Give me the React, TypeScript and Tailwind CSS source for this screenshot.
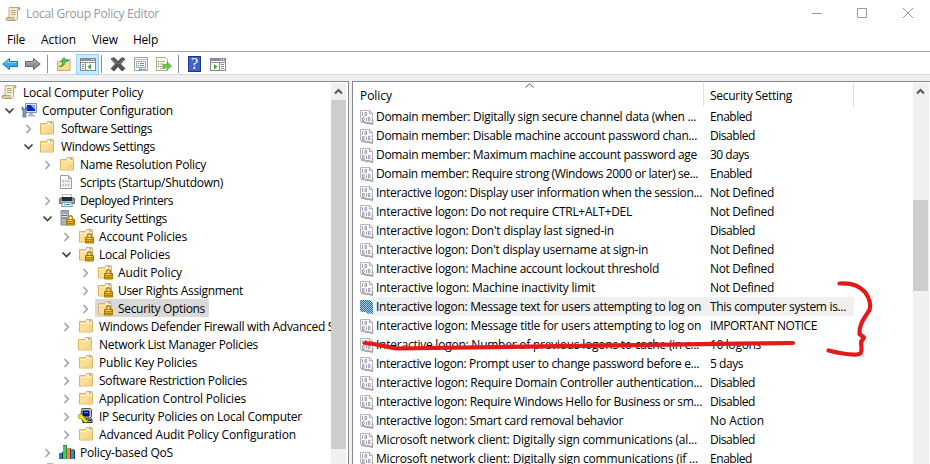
import { useLayoutEffect, useRef, useState } from "react";
import type { ReactNode } from "react";

/* Text whose letter spacing is adjusted so that it takes up a given width. */
function Fit({ text, w, className = "" }: { text: string; w: number; className?: string }) {
  const ref = useRef<HTMLSpanElement>(null);
  const [spacing, setSpacing] = useState(0);
  useLayoutEffect(() => {
    if (ref.current) {
      const natural = ref.current.getBoundingClientRect().width;
      setSpacing((w - natural) / text.length);
    }
  }, [text, w]);
  return (
    <span ref={ref} className={`inline-block shrink-0 whitespace-pre ${className}`} style={{ letterSpacing: `${spacing}px` }}>
      {text}
    </span>
  );
}

function Svg({ children, w = 16 }: { children: ReactNode; w?: number }) {
  return (
    <svg width={w} height="16" viewBox={`0 0 ${w} 16`} className="block shrink-0" fill="none">
      {children}
    </svg>
  );
}

function Scroll() {
  return (
    <Svg>
      <path d="M4.500 1.500h9.500c1.500 0 1.500 2.500 0 2.500h-1.500v7.500c0 2-1 3-2.500 3H2.500c-1.500 0-2-2.500-.5-3h2V3.500c0-1 .2-1.500.5-2z" fill="#f6edcf" stroke="#b0a27c" strokeWidth=".9" />
      <path d="M12.500 4c.2-1-.2-2 1-2.500 2 0 2 2.500.5 2.500z" fill="#bba878" />
      <path d="M2 11.500h7c-.5 1 0 2.500 1 3H2.500c-1.500-.2-1.700-2.500-.5-3z" fill="#dccd9f" stroke="#9c8f6d" strokeWidth=".7" />
      <path d="M6 4.500h4.500M6 6.500h4.500M6 8.500h4.500" stroke="#b3a271" />
    </Svg>
  );
}

function FolderShape() {
  return (
    <>
      <path d="M1.500 3.500h6l1-2h5.500l.5 1v11.500h-13z" fill="#f8d98a" stroke="#d9b563" />
      <path d="M9 2.500h4v2H8z" fill="#fffdf2" />
      <path d="M11 2.500h2v1h-2z" fill="#3b8cde" />
      <path d="M2 5.500h6l1-1h5v9H2z" fill="#fadf98" />
      <path d="M2 5.500h6l1-1h5" stroke="#fff0bd" />
      <path d="M13.500 6v7.500H6z" fill="#f3cd78" opacity=".6" />
    </>
  );
}

function Lock() {
  return (
    <>
      <path d="M9.500 10V8c0-3 4-3 4 0v2" stroke="#a58a3a" strokeWidth="1.500" />
      <path d="M7.500 9.500h8v5.500h-8z" fill="#e1aa18" stroke="#a87500" />
      <path d="M8 11.500h7M8 13.500h7" stroke="#b57d00" />
      <path d="M9 10.500h4" stroke="#ffe27b" />
    </>
  );
}

function TreeIcon({ kind }: { kind: string }) {
  if (kind === "root") return <Scroll />;
  if (kind === "folder") return <Svg><FolderShape /></Svg>;
  if (kind === "locked") return <Svg><FolderShape /><Lock /></Svg>;
  if (kind === "computer")
    return (
      <Svg>
        <path d="M4.500 1.500h11v9h-11z" fill="#dbe2ee" stroke="#8290a8" />
        <path d="M6 3h8v6H6z" fill="#0927c3" />
        <path d="M10 3h4v4c-2-.5-3-2-4-4z" fill="#7aa6ff" />
        <path d="M8 11h4v2h2v1.500H7V13h1z" fill="#a9b5c6" />
        <path d="M1 5v3l1 1v6h3V9l1-1V5H5v2H2V5z" fill="#7c9cc0" stroke="#47678d" strokeWidth=".7" />
      </Svg>
    );
  if (kind === "script")
    return (
      <Svg>
        <path d="M1.500 1.500h8l3 3v10h-11z" fill="#fbfbfb" stroke="#9b9b9b" />
        <path d="M9.500 1.500v3h3" stroke="#9b9b9b" />
        <path d="M5 5.500L3.500 7 5 8.500M9 5.500L10.500 7 9 8.500M5 9.500L3.500 11 5 12.500M9 9.500L10.500 11 9 12.500M5.800 7h2.500M5.800 11h2.500" stroke="#777" strokeWidth=".8" />
      </Svg>
    );
  if (kind === "printer")
    return (
      <Svg>
        <path d="M3.500 2.500h9v4h-9z" fill="#f8f8f8" stroke="#b9bec3" />
        <path d="M.5 6.500l2-1h11l2 1v5H.5z" fill="#8a8e92" stroke="#6d7175" />
        <path d="M3 5h10v4H3z" fill="#292d31" />
        <path d="M1 9.500h14" stroke="#b9bdc1" />
        <path d="M3.500 10.500h9l1 4h-11z" fill="#eef6fa" stroke="#8c9aa3" />
        <path d="M5 12.500h3" stroke="#52a9d9" />
        <path d="M8 12.500h3" stroke="#327fad" />
      </Svg>
    );
  if (kind === "server")
    return (
      <Svg>
        <path d="M2 .5h7.500v14.500H2z" fill="#aab7c0" stroke="#82919c" />
        <path d="M3 3h5M3 5.500h5M3 8h5" stroke="#5e6f7b" />
        <path d="M3 4h5M3 6.500h5" stroke="#e1e8ec" />
        <path d="M3 12h2v1H3z" fill="#69c84b" />
        <Lock />
      </Svg>
    );
  if (kind === "ipsec")
    return (
      <Svg>
        <path d="M4 .5h8.500l1 1.500v7l-2 1H4L2.500 8.500z" fill="#c4c4c4" stroke="#555" />
        <path d="M5 3h6v5H5z" fill="#0909cc" stroke="#111" />
        <path d="M6 4.500h4" stroke="#20a7ee" />
        <path d="M4 11h10v3.500H5z" fill="#bbb" stroke="#222" />
        <path d="M0 7l3-1 2 2 4 5v1.500H7L3 10.500H1z" fill="#f5ed00" stroke="#817b00" strokeWidth=".6" />
        <path d="M10 12.500h3" stroke="#333" />
      </Svg>
    );
  return (
    <Svg>
      <g shapeRendering="crispEdges">
        <path d="M0 9h3v6H0z" fill="#1786d3" />
        <path d="M4 1h4v14H4z" fill="#249641" />
        <path d="M4 2h3v13H4z" fill="#55c259" />
        <path d="M8 4h3v11H8z" fill="#f38050" />
        <path d="M11 4h1v11h-1z" fill="#753e25" />
        <path d="M12 5h3v10h-3z" fill="#218ed7" />
        <path d="M15 6h1v9h-1zM3 8h1v7H3z" fill="#143a52" />
      </g>
    </Svg>
  );
}

type Node = { level: number; text: string; w: number; icon: string; open?: boolean; leaf?: boolean; selected?: boolean };

const tree: Node[] = [
  { level: 0, text: "Local Computer Policy", w: 120, icon: "root", leaf: true },
  { level: 1, text: "Computer Configuration", w: 131, icon: "computer", open: true },
  { level: 2, text: "Software Settings", w: 91, icon: "folder" },
  { level: 2, text: "Windows Settings", w: 94, icon: "folder", open: true },
  { level: 3, text: "Name Resolution Policy", w: 126, icon: "folder" },
  { level: 3, text: "Scripts (Startup/Shutdown)", w: 143, icon: "script", leaf: true },
  { level: 3, text: "Deployed Printers", w: 93, icon: "printer" },
  { level: 3, text: "Security Settings", w: 87, icon: "server", open: true },
  { level: 4, text: "Account Policies", w: 88, icon: "locked" },
  { level: 4, text: "Local Policies", w: 71, icon: "locked", open: true },
  { level: 5, text: "Audit Policy", w: 64, icon: "locked" },
  { level: 5, text: "User Rights Assignment", w: 125, icon: "locked" },
  { level: 5, text: "Security Options", w: 87, icon: "locked", selected: true },
  { level: 4, text: "Windows Defender Firewall with Advanced Security", w: 271, icon: "folder" },
  { level: 4, text: "Network List Manager Policies", w: 159, icon: "folder", leaf: true },
  { level: 4, text: "Public Key Policies", w: 98, icon: "folder" },
  { level: 4, text: "Software Restriction Policies", w: 148, icon: "folder" },
  { level: 4, text: "Application Control Policies", w: 147, icon: "folder" },
  { level: 4, text: "IP Security Policies on Local Computer", w: 203, icon: "ipsec" },
  { level: 4, text: "Advanced Audit Policy Configuration", w: 197, icon: "folder" },
  { level: 3, text: "Policy-based QoS", w: 93, icon: "qos" },
  { level: 2, text: "", w: 0, icon: "folder", leaf: true },
];

const indents = ["pl-[2px]", "pl-[2px]", "pl-[21px]", "pl-[40px]", "pl-[59px]", "pl-[78px]"];

function Chevron({ open }: { open?: boolean }) {
  return (
    <svg width="16" height="18" viewBox="0 0 16 18" fill="none" className="block">
      {open ? (
        <path d="M3.500 7.500l4 4 4-4" stroke="#404040" strokeWidth="1.700" />
      ) : (
        <path d="M5.500 6l3.800 4-3.800 4" stroke="#a6a6a6" strokeWidth="1.700" />
      )}
    </svg>
  );
}

function TreeRow({ node }: { node: Node }) {
  return (
    <div className={`flex h-[18px] shrink-0 items-center ${indents[node.level]}`}>
      {node.level > 0 && <div className="w-[19px] shrink-0">{!node.leaf && <Chevron open={node.open} />}</div>}
      {!node.selected && (
        <div className="w-[21px] shrink-0">
          <div className={node.level === 2 || (node.leaf && node.icon !== "script") ? "-ml-px" : ""}>
            <TreeIcon kind={node.icon} />
          </div>
        </div>
      )}
      <div className={`flex h-[18px] items-center pr-1 ${node.selected ? "-ml-[2px] bg-[#d9d9d9] pl-[2px]" : ""}`}>
        {node.selected && (
          <div className="w-[21px]">
            <TreeIcon kind={node.icon} />
          </div>
        )}
        <Fit text={node.text} w={node.w} className="pt-px" />
      </div>
    </div>
  );
}

type Policy = [string, number, string, number];

const policies: Policy[] = [
  ["Domain member: Digitally sign secure channel data (when ...", 320, "Enabled", 42],
  ["Domain member: Disable machine account password chan...", 321, "Disabled", 45],
  ["Domain member: Maximum machine account password age", 321, "30 days", 39],
  ["Domain member: Require strong (Windows 2000 or later) se...", 322, "Enabled", 42],
  ["Interactive logon: Display user information when the session...", 326, "Not Defined", 64],
  ["Interactive logon: Do not require CTRL+ALT+DEL", 256, "Not Defined", 64],
  ["Interactive logon: Don't display last signed-in", 238, "Disabled", 45],
  ["Interactive logon: Don't display username at sign-in", 272, "Not Defined", 64],
  ["Interactive logon: Machine account lockout threshold", 283, "Not Defined", 64],
  ["Interactive logon: Machine inactivity limit", 219, "Not Defined", 64],
  ["Interactive logon: Message text for users attempting to log on", 325, "This computer system is...", 136],
  ["Interactive logon: Message title for users attempting to log on", 325, "IMPORTANT NOTICE", 107],
  ["Interactive logon: Number of previous logons to cache (in c...", 323, "10 logons", 51],
  ["Interactive logon: Prompt user to change password before e...", 323, "5 days", 33],
  ["Interactive logon: Require Domain Controller authentication...", 326, "Disabled", 45],
  ["Interactive logon: Require Windows Hello for Business or sm...", 326, "Disabled", 45],
  ["Interactive logon: Smart card removal behavior", 247, "No Action", 54],
  ["Microsoft network client: Digitally sign communications (al...", 321, "Disabled", 45],
  ["Microsoft network client: Digitally sign communications (if ...", 322, "Enabled", 42],
];

function PolicyIcon({ selected }: { selected: boolean }) {
  return (
    <svg width="14" height="16" viewBox="0 0 14 16" fill="none" className="block shrink-0">
      {selected ? (
        <>
          <defs>
            <pattern id="dither" width="2" height="2" patternUnits="userSpaceOnUse">
              <rect width="2" height="2" fill="#a4cfef" />
              <path d="M0 0h1v1H0zM1 1h1v1H1z" fill="#0078d7" shapeRendering="crispEdges" />
            </pattern>
          </defs>
          <path d="M0 1h10l3 3v11h-2l-1-1-2 1-2-2H2l-2-1z" fill="url(#dither)" />
        </>
      ) : (
        <>
          <path d="M.5 1.500h9.500l2.500 3v10h-2l-1-1-2 1.500-2-2h-3l-2-1z" fill="#fafafa" stroke="#b7b7b7" />
          <path d="M9.500 1.500v3h3" stroke="#aaa" />
          <path d="M1 13h3l2 1.500 2-1 3 1.500h1.500v-4" stroke="#a2a2a2" strokeWidth="1.400" />
          <path d="M2.500 3v4M2.500 8.500v3h1.500v-3zM5 3.500h1.500v3H5zM6.500 8.500v3.500M8.500 8.500H10v3H8.500z" stroke="#9994ad" strokeWidth=".9" />
        </>
      )}
    </svg>
  );
}

function ScrollArrow() {
  return (
    <svg width="16" height="17" viewBox="0 0 16 17" fill="none" className="block">
      <path d="M4 10.500l3.500-3.500 3.500 3.500" stroke="#555" strokeWidth="2" />
    </svg>
  );
}

/* A small window with a side pane to the left or the right of its arrow. */
function PanelIcon({ arrow }: { arrow: "left" | "right" }) {
  return (
    <Svg>
      <g shapeRendering="crispEdges">
        <path d="M.5 2.500h15v12H.5z" fill="#fff" stroke="#858b93" />
        <path d="M1 3h14v2H1z" fill="#8a9098" />
        <path d="M11 3h1v1h-1zM13 3h1v1h-1z" fill="#fff" />
        <path d="M1 6.500h14" stroke="#8b929b" />
        <path d={arrow === "left" ? "M5.500 7v7M2 8.500h2M2 10.500h2M2 12.500h2" : "M9.500 7v7M11 8.500h3M11 10.500h3M11 12.500h3"} stroke="#7f8fa3" />
      </g>
      <path d={arrow === "left" ? "M11 8v5.500L7.500 10.700z" : "M4 8v5.500l3.500-2.800z"} fill="#2fb022" />
    </Svg>
  );
}

function Separator({ className }: { className: string }) {
  return <div className={`h-[18px] w-px shrink-0 bg-[#8d8d8d] ${className}`} />;
}

function Toolbar() {
  return (
    <div className="flex h-[23px] items-center border-b border-[#d9d9d9] pt-[2px] pl-[2px]">
      <Svg>
        <path d="M.7 8L7.500 2.500v3h8v5h-8v3z" fill="#38ace8" stroke="#1876ae" />
        <path d="M2.500 7.700L6.500 4.500v2h8" stroke="#8ad8fb" />
      </Svg>
      <div className="ml-[7px]">
        <Svg>
          <path d="M15.300 8L8.500 2.500v3h-8v5h8v3z" fill="#929292" stroke="#686868" />
          <path d="M1.500 6.500h8v-2l4 3.200" stroke="#b3b3b3" />
        </Svg>
      </div>
      <Separator className="ml-[6px]" />
      <div className="ml-[8px]">
        <Svg>
          <path d="M1.500 5.500h7l1-2h4.500v11H1.500z" fill="#f9dc90" stroke="#d0ac5b" />
          <path d="M10 4.500h3" stroke="#438dcc" />
          <path d="M3 10.500c3.500-.5 3.500-3 3.500-5H4.500L8 1.500l3.500 4H9c0 3-1.500 5.500-6 5z" fill="#4fc94a" stroke="#289032" strokeWidth=".7" />
        </Svg>
      </div>
      <div className="ml-[4px] flex h-[21px] w-[23px] shrink-0 items-center justify-center border border-[#99d1ff] bg-[#cce8ff]">
        <PanelIcon arrow="left" />
      </div>
      <Separator className="ml-[2px]" />
      <div className="ml-[8px]">
        <Svg>
          <path d="M1 3l3-1.500 4 4 4-4L15 3l-4.500 5 4.500 4.500-3 2.500-4-4.500L4 15l-3-2.500L5.500 8z" fill="#555" stroke="#333" strokeWidth=".7" />
          <path d="M2 3l5 5M14 3l-5 5" stroke="#888" />
        </Svg>
      </div>
      <div className="ml-[7px]">
        <Svg>
          <path d="M1.500 1.500h13v13h-13z" fill="#fafafa" stroke="#a0a0a0" />
          <path d="M2 3.500h12" stroke="#bbb" />
          <path d="M3.500 5.500h9v6h-9z" stroke="#a1a9b3" fill="#fff" />
          <path d="M5 7.500h1M5 9.500h1" stroke="#2786c4" />
          <path d="M7 7.500h4M7 9.500h4" stroke="#798999" />
          <path d="M6 13.300h3" stroke="#25a9dc" strokeWidth="1.400" />
          <path d="M10 13.300h3" stroke="#798999" />
        </Svg>
      </div>
      <div className="ml-[7px]">
        <Svg>
          <path d="M.5 1.500h9l2 2v11H.5z" fill="#fffce9" stroke="#b5ac8c" />
          <path d="M4 5.500h5M4 8h4M4 10.500h4M4 12.500h5" stroke="#a5a298" />
          <path d="M2 5.500h1M2 8h1M2 10.500h1" stroke="#555" />
          <path d="M7 8.500h4V6l4.500 4-4.500 4v-2.500H7z" fill="#67cb45" stroke="#42a530" strokeWidth=".7" />
        </Svg>
      </div>
      <Separator className="ml-[6px]" />
      <div className="ml-[9px] flex h-[16px] w-[13px] shrink-0 items-center justify-center border border-[#20358c] bg-[#3c63ce] font-['Liberation_Serif',serif] text-[16px] text-white">
        ?
      </div>
      <div className="ml-[9px]">
        <PanelIcon arrow="right" />
      </div>
    </div>
  );
}

export default function App() {
  return (
    <div className="relative flex h-[464px] w-[930px] flex-col overflow-hidden bg-white font-['Open_Sans','Noto_Sans',sans-serif] text-[12px] leading-[18px] text-black">
      <div className="flex h-[28px] shrink-0 items-center pl-[5px] text-[#999]">
        <Scroll />
        <Fit text="Local Group Policy Editor" w={133} className="ml-[5px]" />
        <svg width="101" height="12" viewBox="0 0 101 12" fill="none" className="mr-[17px] mb-[2px] ml-auto" stroke="#999">
          <path d="M0 6.500h10" />
          <path d="M45.500 1.500h9v9h-9z" />
          <path d="M91 1l10 10M101 1L91 11" />
        </svg>
      </div>
      <div className="flex h-[24px] shrink-0 items-center border-b border-[#a0a3aa] pt-px pl-[7px]">
        <Fit text="File" w={18} />
        <Fit text="Action" w={35} className="ml-[16px]" />
        <Fit text="View" w={26} className="ml-[16px]" />
        <Fit text="Help" w={25} className="ml-[15px]" />
      </div>
      <Toolbar />
      <div className="flex h-[389px] shrink-0 bg-[#f0f0f0] pt-[6px]">
        <div className="flex w-[349px] shrink-0 border-t border-r border-[#828790] bg-white pt-px">
          <div className="flex w-[331px] shrink-0 flex-col overflow-hidden">
            {tree.map((node, i) => (
              <TreeRow key={i} node={node} />
            ))}
          </div>
          <div className="w-[15px] shrink-0 bg-[#f0f0f0]">
            <ScrollArrow />
            <div className="h-[349px] bg-[#cdcdcd]" />
          </div>
        </div>
        <div className="ml-[3px] flex grow border-t border-l border-[#828790] bg-white pt-px">
          <div className="w-[560px] shrink-0">
            <div className="flex h-[24px] pl-[7px]">
              <div className="relative flex w-[344px] items-center border-r border-[#e2e2e2] pt-px">
                <Fit text="Policy" w={32} />
                <svg width="9" height="5" viewBox="0 0 9 5" fill="none" className="absolute top-0 left-[165px]">
                  <path d="M.5 4.500L4.500 .8l4 3.700" stroke="#555" />
                </svg>
              </div>
              <div className="flex w-[150px] items-center border-r border-[#e2e2e2] pt-px pl-[6px]">
                <Fit text="Security Setting" w={82} />
              </div>
            </div>
            <div className="h-[357px] overflow-hidden leading-[20px]">
              {policies.map(([name, w, value, vw], i) => (
                <div key={name} className="flex h-[19px] items-center pl-[7px]">
                  <PolicyIcon selected={i === 10} />
                  <div className={`ml-px flex h-[19px] w-[479px] items-start pl-px ${i === 10 ? "bg-[#f0f0f0]" : ""}`}>
                    <div className="flex w-[334px] shrink-0">
                      <Fit text={name} w={w} />
                    </div>
                    <Fit text={value} w={vw} />
                  </div>
                </div>
              ))}
            </div>
          </div>
          <div className="w-[16px] shrink-0 bg-[#f0f0f0]">
            <ScrollArrow />
            <div className="mt-[100px] h-[91px] w-[15px] bg-[#cdcdcd]" />
          </div>
        </div>
      </div>
      <svg width="930" height="464" viewBox="0 0 930 464" fill="none" className="pointer-events-none absolute inset-0" stroke="#e61919" strokeLinecap="round" strokeLinejoin="round">
        <path d="M365 343C378 344 386 347 397 348.500C500 348 650 344 793 343" strokeWidth="4.200" />
        <path d="M839.500 283.500C854 282.500 860 287 865 292C870 299 871 305 869.500 310C862 321 859 326 859.500 334L864 337.500L861 342C862 352 862 354 857 354.500C845 355 838 353 828.500 350.500" strokeWidth="4.200" />
      </svg>
    </div>
  );
}
